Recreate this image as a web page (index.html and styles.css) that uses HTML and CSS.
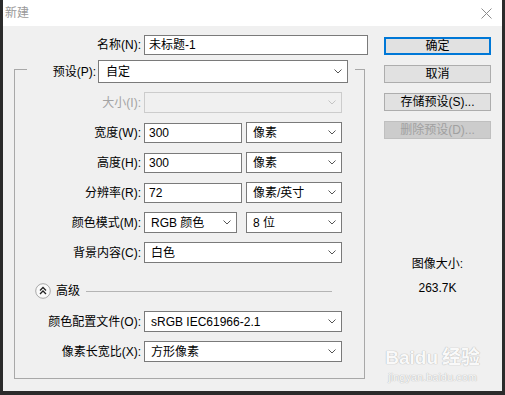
FILE: index.html
```html
<!DOCTYPE html>
<html>
    <head>
        <meta charset="UTF-8">
        <title>新建</title>
        <link rel="stylesheet" href="styles.css">
    </head>

    <body>
        <div class="window">
            <div class="titlebar">
                <span class="title">新建</span>
                <svg class="close" width="11" height="11" viewBox="0 0 11 11"><path d="M0.5 0.5 L10.5 10.5 M10.5 0.5 L0.5 10.5" stroke="#8c8c8c" stroke-width="1"/></svg>
            </div>

            <div class="dialog">
                <div class="main">
                    <div class="name-row">
                        <label>名称(N):</label>
                        <div class="field name-field">未标题-1</div>
                    </div>

                    <fieldset class="group">
                        <legend>
                            <div class="preset-row">
                                <label>预设(P):</label>
                                <div class="select preset">
                                    <span>自定</span>
                                    <svg width="8" height="5" viewBox="0 0 8 5"><path d="M0.5 0.5 L4 4 L7.5 0.5" fill="none" stroke="#555" stroke-width="1"/></svg>
                                </div>
                            </div>
                        </legend>

                        <div class="row disabled">
                            <label>大小(I):</label>
                            <div class="select full">
                                <span></span>
                                <svg width="8" height="5" viewBox="0 0 8 5"><path d="M0.5 0.5 L4 4 L7.5 0.5" fill="none" stroke="#c4c4c4" stroke-width="1"/></svg>
                            </div>
                        </div>

                        <div class="row">
                            <label>宽度(W):</label>
                            <div class="field num">300</div>
                            <div class="select unit">
                                <span>像素</span>
                                <svg width="8" height="5" viewBox="0 0 8 5"><path d="M0.5 0.5 L4 4 L7.5 0.5" fill="none" stroke="#555" stroke-width="1"/></svg>
                            </div>
                        </div>

                        <div class="row">
                            <label>高度(H):</label>
                            <div class="field num">300</div>
                            <div class="select unit">
                                <span>像素</span>
                                <svg width="8" height="5" viewBox="0 0 8 5"><path d="M0.5 0.5 L4 4 L7.5 0.5" fill="none" stroke="#555" stroke-width="1"/></svg>
                            </div>
                        </div>

                        <div class="row">
                            <label>分辨率(R):</label>
                            <div class="field num">72</div>
                            <div class="select unit">
                                <span>像素/英寸</span>
                                <svg width="8" height="5" viewBox="0 0 8 5"><path d="M0.5 0.5 L4 4 L7.5 0.5" fill="none" stroke="#555" stroke-width="1"/></svg>
                            </div>
                        </div>

                        <div class="row">
                            <label>颜色模式(M):</label>
                            <div class="select mode">
                                <span>RGB 颜色</span>
                                <svg width="8" height="5" viewBox="0 0 8 5"><path d="M0.5 0.5 L4 4 L7.5 0.5" fill="none" stroke="#555" stroke-width="1"/></svg>
                            </div>
                            <div class="select unit">
                                <span>8 位</span>
                                <svg width="8" height="5" viewBox="0 0 8 5"><path d="M0.5 0.5 L4 4 L7.5 0.5" fill="none" stroke="#555" stroke-width="1"/></svg>
                            </div>
                        </div>

                        <div class="row">
                            <label>背景内容(C):</label>
                            <div class="select full">
                                <span>白色</span>
                                <svg width="8" height="5" viewBox="0 0 8 5"><path d="M0.5 0.5 L4 4 L7.5 0.5" fill="none" stroke="#555" stroke-width="1"/></svg>
                            </div>
                        </div>

                        <div class="advanced">
                            <svg class="adv-icon" width="16" height="16" viewBox="0 0 16 16">
                                <circle cx="8" cy="8" r="7.3" fill="#fafafa" stroke="#a8a8a8" stroke-width="1"/>
                                <path d="M5 7.5 L8 4.5 L11 7.5 M5 11 L8 8 L11 11" fill="none" stroke="#222" stroke-width="1.3"/>
                            </svg>
                            <span>高级</span>
                            <div class="adv-line"></div>
                        </div>

                        <div class="row">
                            <label>颜色配置文件(O):</label>
                            <div class="select full">
                                <span>sRGB IEC61966-2.1</span>
                                <svg width="8" height="5" viewBox="0 0 8 5"><path d="M0.5 0.5 L4 4 L7.5 0.5" fill="none" stroke="#555" stroke-width="1"/></svg>
                            </div>
                        </div>

                        <div class="row">
                            <label>像素长宽比(X):</label>
                            <div class="select full">
                                <span>方形像素</span>
                                <svg width="8" height="5" viewBox="0 0 8 5"><path d="M0.5 0.5 L4 4 L7.5 0.5" fill="none" stroke="#555" stroke-width="1"/></svg>
                            </div>
                        </div>
                    </fieldset>
                </div>

                <div class="side">
                    <div class="btn default">确定</div>
                    <div class="btn">取消</div>
                    <div class="btn">存储预设(S)...</div>
                    <div class="btn off">删除预设(D)...</div>

                    <div class="size-label">图像大小:</div>
                    <div class="size-value">263.7K</div>
                </div>
            </div>

            <!-- watermark from the original screenshot -->
            <div class="watermark">
                <div class="wm-logo">Baidu<span class="wm-cn">经验</span></div>
                <div class="wm-url">jingyan.baidu.com</div>
            </div>
        </div>
    </body>
</html>
```

FILE: styles.css
```css
body {
    margin: 0;
    background-color: #2b2b2b;
    font-family: "Liberation Sans", "Noto Sans CJK SC", sans-serif;
    font-size: 12px;
    line-height: 16px;
    color: #000;
}

.window {
    position: relative;
    width: 505px;
    height: 395px;
    box-sizing: border-box;
    border: 3px solid #2b2b2b;
    border-top: none;
    border-bottom-width: 4px;
    background-color: #f0f0f0;
    overflow: hidden;
}

.titlebar {
    height: 26px;
    background-color: #fff;
    display: flex;
    align-items: center;
    justify-content: space-between;
    padding: 0 10px 0 2px;
}

.title {
    color: #999;
}

.dialog {
    display: flex;
    padding: 9px 11px 0 11px;
}

.main {
    width: 354px;
}

label {
    white-space: nowrap;
}

.name-row {
    display: flex;
    align-items: center;
}

.name-row label {
    width: 127px;
    margin-right: 3px;
    text-align: right;
}

.field {
    height: 20px;
    box-sizing: border-box;
    border: 1px solid #7a7a7a;
    background-color: #fff;
    padding-left: 4px;
    line-height: 18px;
}

.name-field {
    width: 224px;
}

.num {
    width: 98px;
    margin-right: 4px;
}

/* group box with the preset row sitting on its top edge */
.group {
    margin: 0;
    padding: 0 0 7px 0;
    width: 351px;
    height: 324px;
    box-sizing: border-box;
    border: 1px solid #a8a8a8;
}

.group legend {
    margin-left: 12px;
    padding: 5px 7px 0 0;
}

.preset-row {
    display: flex;
    align-items: center;
    width: 321px;
}

.preset-row label {
    width: 69px;
    margin-right: 2px;
    text-align: right;
}

.select {
    display: flex;
    align-items: center;
    justify-content: space-between;
    height: 21px;
    box-sizing: border-box;
    border: 1px solid #7a7a7a;
    background-color: #fff;
    padding: 0 5px 0 6px;
}

.preset {
    width: 250px;
    height: 23px;
    padding-left: 7px;
}

.full {
    width: 198px;
}

.unit {
    width: 96px;
}

.mode {
    width: 93px;
    margin-right: 9px;
}

.row {
    display: flex;
    align-items: center;
    height: 21px;
    margin-top: 9px;
}

.row label {
    width: 126px;
    margin-right: 3px;
    text-align: right;
}

.disabled label {
    color: #a3a3a3;
}

.disabled .select {
    background-color: #f0f0f0;
    border-color: #cccccc;
}

.advanced {
    display: flex;
    align-items: center;
    height: 16px;
    margin: 20px 0 12px 20px;
}

.adv-icon {
    margin-right: 5px;
}

.adv-line {
    width: 246px;
    height: 1px;
    margin-left: 6px;
    background-color: #b4b4b4;
}

.side {
    display: flex;
    flex-direction: column;
    align-items: center;
    width: 107px;
    margin-left: 16px;
    padding-top: 2px;
}

.btn {
    width: 100%;
    height: 18px;
    box-sizing: border-box;
    border: 1px solid #adadad;
    background-color: #e1e1e1;
    text-align: center;
    line-height: 16px;
    margin-bottom: 10px;
}

.btn.default {
    border: 2px solid #0078d7;
    line-height: 14px;
}

.btn.off {
    background-color: #cccccc;
    border-color: #bfbfbf;
    color: #a0a0a0;
}

.size-label {
    margin-top: 107px;
}

.size-value {
    margin-top: 8px;
}

.watermark {
    position: absolute;
    right: 22px;
    bottom: 7px;
    text-align: center;
    color: #f9f9f9;
    text-shadow: 0 0 1px #b8b8b8, 0 0 1px #b8b8b8;
}

.wm-logo {
    font-size: 19px;
    font-weight: bold;
    line-height: 24px;
}

.wm-cn {
    margin-left: 4px;
}

.wm-url {
    font-size: 11px;
    line-height: 14px;
}
```
